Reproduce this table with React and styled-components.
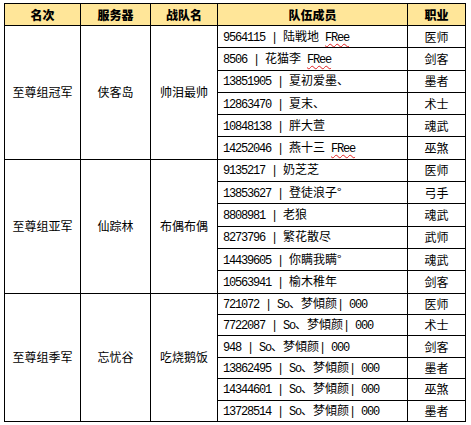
import React from 'react';
import styled, { createGlobalStyle } from 'styled-components';

const GlobalStyle = createGlobalStyle`
  html, body {
    margin: 0;
    padding: 0;
    background: #fff;
    font-family: "Noto Sans CJK SC", "Liberation Sans", sans-serif;
    color: #000;
  }
`;

const Page = styled.div`
  padding: 3px 0 0 4px;
  width: 471px;
  height: 425px;
  box-sizing: border-box;
  overflow: hidden;
`;

const Table = styled.table`
  border-collapse: collapse;
  table-layout: fixed;
  width: 461px;
  font-size: 12px;
`;

const Col = styled.col`
  width: ${p => p.$w}px;
`;

const Head = styled.th`
  height: 21px;
  padding: 0;
  border: 1px solid #000;
  background: #ffe699;
  font-weight: 900;
  font-size: 12px;
  text-align: center;
  line-height: 1;
`;

const Cell = styled.td`
  height: ${p => p.$h}px;
  padding: 0 0 0 ${p => (p.$left ? 5 : 0)}px;
  border: 1px solid #000;
  text-align: ${p => (p.$left ? 'left' : 'center')};
  vertical-align: middle;
  white-space: nowrap;
  line-height: 1;
`;

const Half = styled.span`
  font-family: "Liberation Mono", "DejaVu Sans Mono", monospace;
  font-size: 12px;
  letter-spacing: -1.2px;
`;

const Squiggle = styled.span`
  font-family: "Liberation Mono", monospace;
  font-size: 12px;
  letter-spacing: -1.2px;
  text-decoration: underline wavy #e02020;
  text-decoration-thickness: 1px;
  text-underline-offset: 2px;
`;

const Note = styled.div`
  padding-left: 221px;
  margin-top: 1px;
  font-size: 12px;
  line-height: 16px;
`;

// split into ascii / wide runs so latin text gets half-width metrics
function Mixed({ text }) {
  const parts = text.match(/[\x20-\x7e]+|[^\x20-\x7e]+/g) || [];
  return parts.map((p, i) =>
    /^[\x20-\x7e]+$/.test(p) ? <Half key={i}>{p}</Half> : <span key={i}>{p}</span>
  );
}

const groups = [
  {
    rank: '至尊组冠军',
    server: '侠客岛',
    team: '帅泪最帅',
    h: 21.3,
    members: [
      ['9564115 | 陆戦地 ', 'FRee', '医师'],
      ['8506 | 花猫李 ', 'FRee', '剑客'],
      ['13851905 | 夏初爱墨、', '', '墨者'],
      ['12863470 | 夏末、', '', '术士'],
      ['10848138 | 胖大萱', '', '魂武'],
      ['14252046 | 燕十三 ', 'FRee', '巫煞'],
    ],
  },
  {
    rank: '至尊组亚军',
    server: '仙踪林',
    team: '布偶布偶',
    h: 21.3,
    members: [
      ['9135217 | 奶芝芝', '', '医师'],
      ['13853627 | 登徒浪子°', '', '弓手'],
      ['8808981 | 老狼', '', '魂武'],
      ['8273796 | 繁花散尽', '', '武师'],
      ['14439605 | 你瞒我瞒°', '', '魂武'],
      ['10563941 | 榆木稚年', '', '剑客'],
    ],
  },
  {
    rank: '至尊组季军',
    server: '忘忧谷',
    team: '吃烧鹅饭',
    h: 20.4,
    members: [
      ['721072 | So、梦傾颜| 000', '', '医师'],
      ['7722087 | So、梦傾颜| 000', '', '术士'],
      ['948 | So、梦傾颜| 000', '', '剑客'],
      ['13862495 | So、梦傾颜| 000', '', '墨者'],
      ['14344601 | So、梦傾颜| 000', '', '巫煞'],
      ['13728514 | So、梦傾颜| 000', '', '墨者'],
    ],
  },
];

export default function App() {
  return (
    <>
      <GlobalStyle />
      <Page>
        <Table>
          <colgroup>
            <Col $w={76} />
            <Col $w={70} />
            <Col $w={67} />
            <Col $w={190} />
            <Col $w={58} />
          </colgroup>
          <thead>
            <tr>
              <Head>名次</Head>
              <Head>服务器</Head>
              <Head>战队名</Head>
              <Head>队伍成员</Head>
              <Head>职业</Head>
            </tr>
          </thead>
          <tbody>
            {groups.map(g =>
              g.members.map((m, i) => (
                <tr key={g.rank + i}>
                  {i === 0 && (
                    <>
                      <Cell rowSpan={6} $h={g.h}>{g.rank}</Cell>
                      <Cell rowSpan={6} $h={g.h}>{g.server}</Cell>
                      <Cell rowSpan={6} $h={g.h}>{g.team}</Cell>
                    </>
                  )}
                  <Cell $h={g.h} $left>
                    <Mixed text={m[0]} />
                    {m[1] && <Squiggle>{m[1]}</Squiggle>}
                  </Cell>
                  <Cell $h={g.h}>{m[2]}</Cell>
                </tr>
              ))
            )}
          </tbody>
        </Table>
        <Note>一 梅</Note>
      </Page>
    </>
  );
}
